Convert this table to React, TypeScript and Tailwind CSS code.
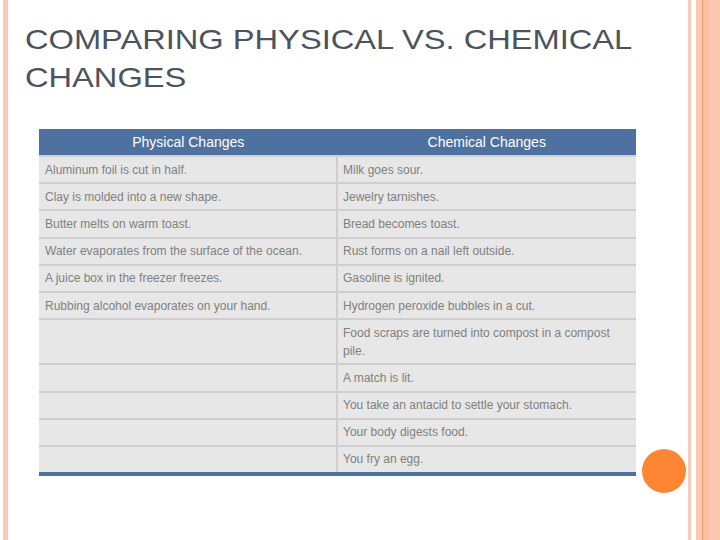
const rows: [string, string][] = [
  ["Aluminum foil is cut in half.", "Milk goes sour."],
  ["Clay is molded into a new shape.", "Jewelry tarnishes."],
  ["Butter melts on warm toast.", "Bread becomes toast."],
  ["Water evaporates from the surface of the ocean.", "Rust forms on a nail left outside."],
  ["A juice box in the freezer freezes.", "Gasoline is ignited."],
  ["Rubbing alcohol evaporates on your hand.", "Hydrogen peroxide bubbles in a cut."],
  ["", "Food scraps are turned into compost in a compost pile."],
  ["", "A match is lit."],
  ["", "You take an antacid to settle your stomach."],
  ["", "Your body digests food."],
  ["", "You fry an egg."],
];

function ChangesTable() {
  return (
    <div className="ml-[14px] w-[597px] border-b-4 border-[#4e71a0] text-[12px] leading-[18px] text-[#808080]">
      <div className="grid h-[26px] grid-cols-2 bg-[#4e71a0] text-[14px] leading-[26px] text-white">
        <div className="text-center">Physical Changes</div>
        <div className="text-center">Chemical Changes</div>
      </div>
      {rows.map(([physical, chemical], i) => (
        <div key={i} className="grid grid-cols-[299px_1fr] border-t-2 border-[#cfcfcf] bg-[#e7e7e7]">
          <div className="border-r-2 border-[#cfcfcf] px-[6px] py-[3.6px]">{physical}</div>
          <div className="px-[5px] py-[3.6px]">{chemical}</div>
        </div>
      ))}
    </div>
  );
}

export default function App() {
  return (
    <div
      className="relative flex h-[540px] w-[720px] overflow-hidden bg-white"
      style={{ fontFamily: '"Liberation Sans", Arial, sans-serif' }}
    >
      {/* left accent bar */}
      <div className="ml-[3px] w-[5px] shrink-0 bg-[#f8c9b5]" />

      <main className="flex-1 pl-[17px] pt-[21px]">
        {/* slide title is stretched wide in the original */}
        <h1 className="origin-left scale-x-[1.165] whitespace-nowrap text-[28px] leading-[38px] font-normal text-[#4d535d]">
          COMPARING PHYSICAL VS. CHEMICAL
          <br />
          CHANGES
        </h1>
        <div className="mt-[32px]">
          <ChangesTable />
        </div>
      </main>

      {/* right stripes */}
      <div className="flex shrink-0">
        <div className="w-[3px] bg-[#f9cdb9]" />
        <div className="w-[5px] bg-white" />
        <div className="w-[6px] bg-[#fbc9b1]" />
        <div className="w-[1px] bg-[#e89a6a]" />
        <div className="w-[6px] bg-[#fbbfa6]" />
        <div className="w-[11px] bg-[#fdc8b3]" />
      </div>

      {/* orange dot */}
      <div className="absolute left-[642px] top-[449px] h-[44px] w-[44px] rounded-full bg-[#fd8533]" />
    </div>
  );
}
